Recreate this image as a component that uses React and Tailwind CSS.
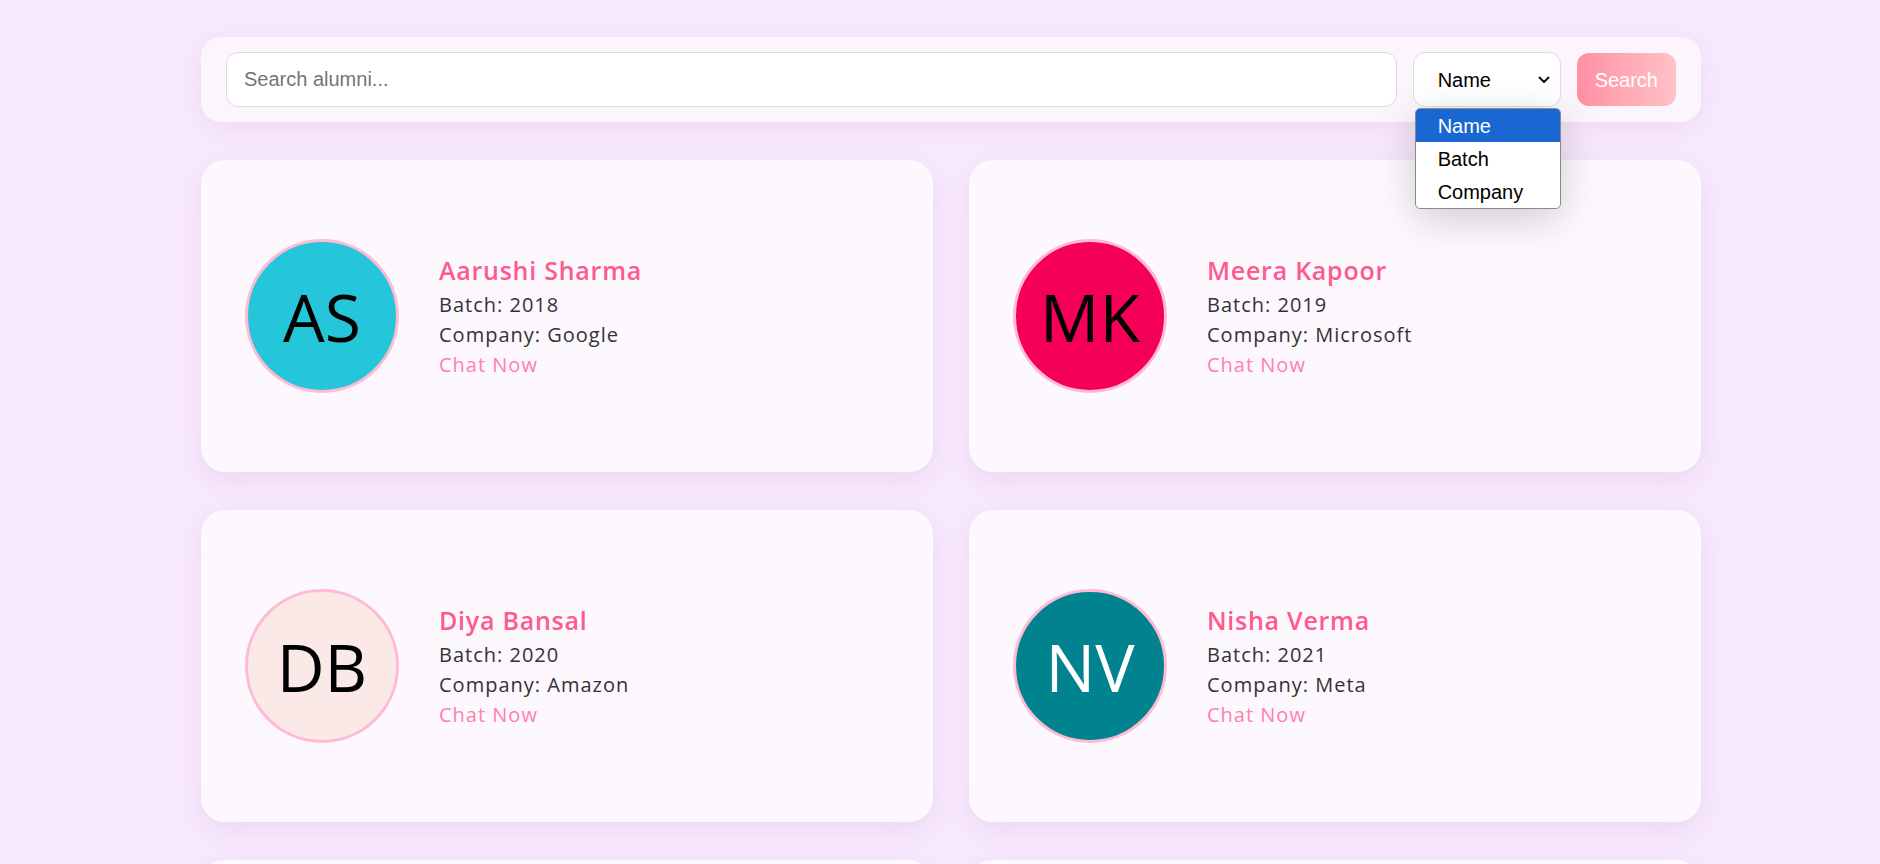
import { useState } from "react";

const alumni = [
  { initials: "AS", name: "Aarushi Sharma", batch: 2018, company: "Google", bg: "bg-[#26c6da]", fg: "text-black" },
  { initials: "MK", name: "Meera Kapoor", batch: 2019, company: "Microsoft", bg: "bg-[#f50057]", fg: "text-black" },
  { initials: "DB", name: "Diya Bansal", batch: 2020, company: "Amazon", bg: "bg-[#fbe9e7]", fg: "text-black" },
  { initials: "NV", name: "Nisha Verma", batch: 2021, company: "Meta", bg: "bg-[#00838f]", fg: "text-white" },
  { initials: "RK", name: "Riya Khanna", batch: 2017, company: "Adobe", bg: "bg-[#7e57c2]", fg: "text-white" },
  { initials: "PS", name: "Pooja Singh", batch: 2022, company: "Netflix", bg: "bg-[#ffb74d]", fg: "text-black" },
];

const filters = ["Name", "Batch", "Company"];

const Chevron = () => (
  <svg width="12" height="8" viewBox="0 0 12 8" fill="none">
    <path d="M1.5 1.5 6 6l4.5-4.5" stroke="#111" strokeWidth="2" strokeLinecap="round" strokeLinejoin="round" />
  </svg>
);

const SearchBar = () => {
  const [query, setQuery] = useState("");
  const [filter] = useState("Name");

  return (
    <div className="flex items-center gap-[16px] px-[25px] py-[15px] bg-[#fcf5fe] rounded-[20px] shadow-[0_6px_24px_rgba(190,150,215,0.18)] font-['Liberation_Sans',Arial,sans-serif]">
      <input
        value={query}
        onChange={e => setQuery(e.target.value)}
        placeholder="Search alumni..."
        className="flex-1 h-[55px] px-[17px] bg-white border border-[#dcdcdc] rounded-[12px] text-[20px] text-black placeholder:text-[#757575] outline-none"
      />
      <div className="relative">
        <div className="w-[148px] h-[55px] flex items-center justify-between pl-[24px] pr-[10px] bg-white border border-[#dcdcdc] rounded-[12px] text-[20px] text-black">
          <span>{filter}</span>
          <Chevron />
        </div>
        {/* open native dropdown */}
        <div className="absolute left-[2px] top-[56px] w-[146px] bg-white border border-[#8a8a8a] rounded-[5px] overflow-hidden shadow-[0_10px_40px_rgba(0,0,0,0.18)] z-10">
          {filters.map(f => (
            <div
              key={f}
              className={`h-[33px] flex items-center pl-[22px] text-[20px] ${f === filter ? "bg-[#1967d2] text-white" : "text-black"}`}
            >
              {f}
            </div>
          ))}
        </div>
      </div>
      <button className="h-[53px] px-[18px] rounded-[12px] bg-gradient-to-r from-[#ff8fa3] to-[#ffc2c6] text-white text-[20px]">
        Search
      </button>
    </div>
  );
};

const AlumniCard = ({ person }) => (
  <div className="h-[312px] flex items-center pl-[44px] bg-[#fdf7fe] rounded-[24px] shadow-[0_8px_26px_rgba(190,150,215,0.22)]">
    <div
      className={`w-[154px] h-[154px] shrink-0 rounded-full border-[3px] border-[#ffbbd3] flex items-center justify-center ${person.bg} ${person.fg} font-['Open_Sans',sans-serif] text-[66px] leading-none`}
    >
      {person.initials}
    </div>
    <div className="ml-[40px] flex flex-col font-['Open_Sans',sans-serif]">
      <span className="text-[25px] leading-[36px] mb-[2px] font-semibold tracking-[0.03em] text-[#ff5a8c]">
        {person.name}
      </span>
      <span className="text-[20px] leading-[30px] tracking-[0.05em] text-[#333]">Batch: {person.batch}</span>
      <span className="text-[20px] leading-[30px] tracking-[0.05em] text-[#333]">Company: {person.company}</span>
      <a href="#" className="text-[20px] leading-[30px] tracking-[0.05em] text-[#ff80ab]">
        Chat Now
      </a>
    </div>
  </div>
);

export default function App() {
  return (
    <div className="min-h-screen bg-[#f8e9fc] pt-[37px] pb-[40px] pl-[201px]">
      <div className="w-[1500px]">
        <SearchBar />
        <div className="mt-[38px] grid grid-cols-2 gap-x-[36px] gap-y-[38px]">
          {alumni.map(p => (
            <AlumniCard key={p.initials} person={p} />
          ))}
        </div>
      </div>
    </div>
  );
}
